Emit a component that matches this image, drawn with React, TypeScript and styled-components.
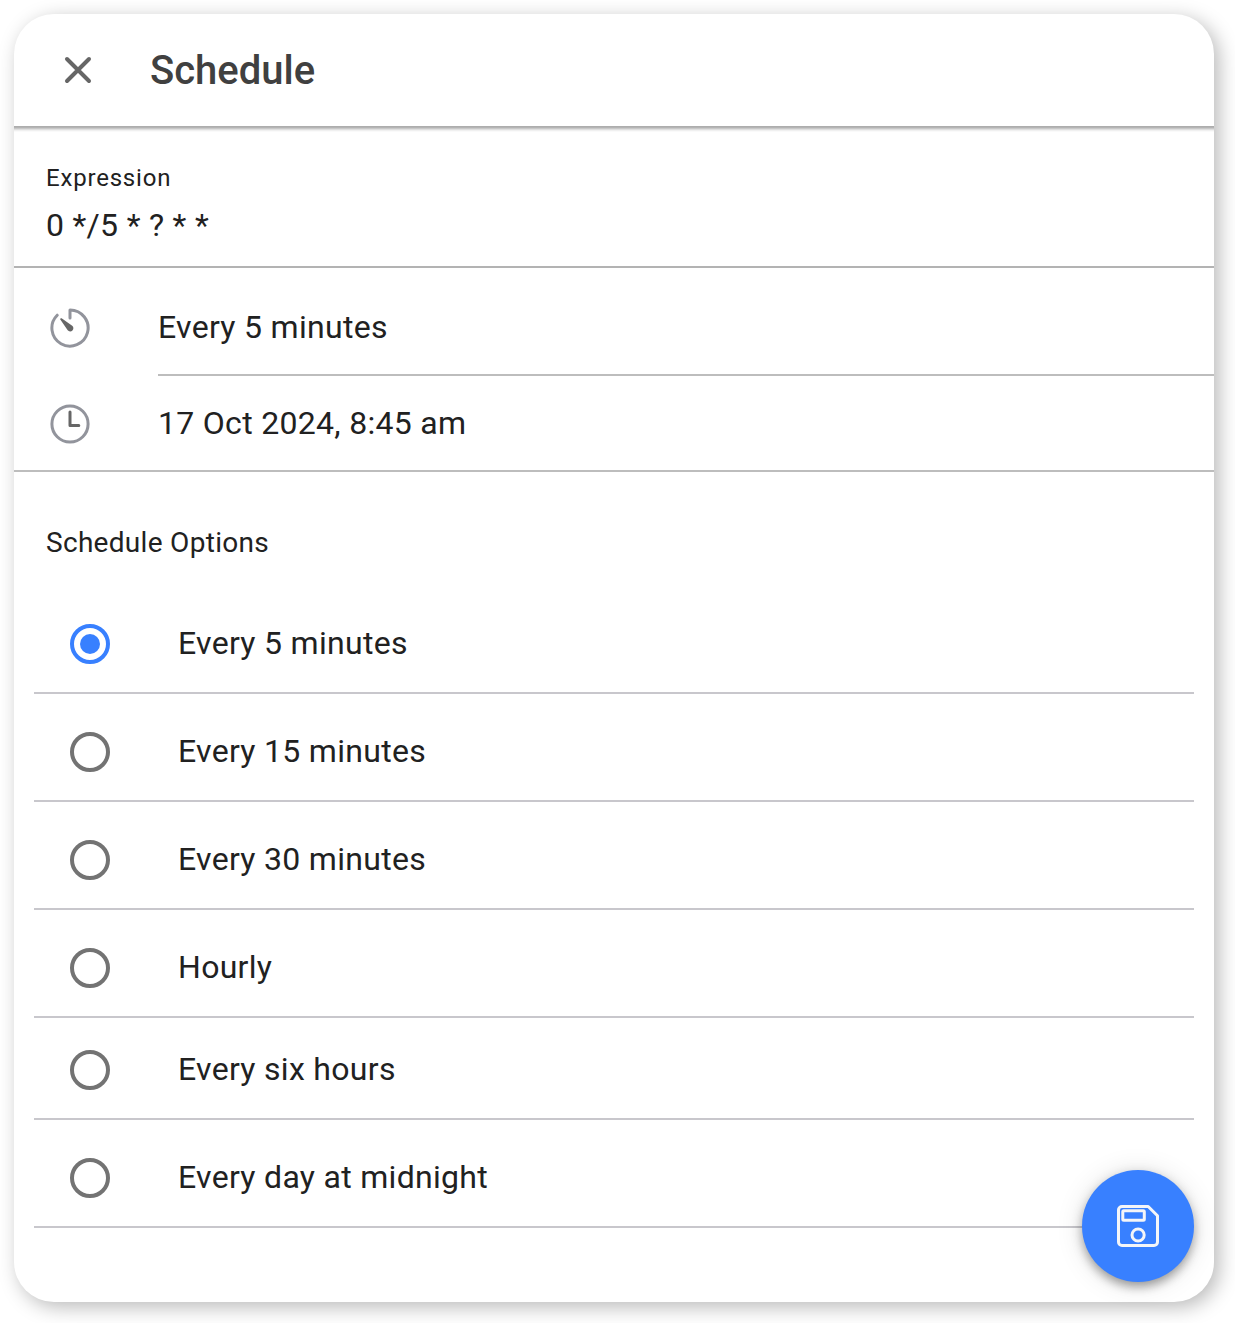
import React, { useState } from "react";
import styled, { createGlobalStyle } from "styled-components";

const GlobalStyle = createGlobalStyle`
  *, *::before, *::after { box-sizing: border-box; }
  body {
    margin: 0;
    background: #ffffff;
    color: #212121;
    font-family: Roboto, "Liberation Sans", sans-serif;
  }
`;

const Page = styled.div`
  height: 1323px;
  padding: 14px 0 0 14px;
  overflow: hidden;
`;

const Card = styled.main`
  position: relative;
  display: flex;
  flex-direction: column;
  width: 1200px;
  height: 1288px;
  background: #ffffff;
  border-radius: 40px;
  box-shadow: 5px 5px 20px rgba(0, 0, 0, 0.28);
`;

const Header = styled.header`
  display: flex;
  align-items: center;
  gap: 44px;
  flex: none;
  height: 112px;
  padding-left: 36px;
`;

const HeaderShade = styled.div`
  flex: none;
  height: 6px;
  margin-bottom: -6px;
  background: linear-gradient(
    to bottom,
    #adadad 0 1px,
    #b4b4b4 1px 2px,
    #c8c8c8 2px 3px,
    #dedede 3px 4px,
    #f0f0f0 4px 5px,
    #fafafa 5px 6px
  );
`;

const CloseButton = styled.button`
  display: grid;
  place-items: center;
  width: 56px;
  height: 56px;
  padding: 0;
  border: 0;
  background: none;
`;

const Title = styled.h1`
  margin: 0;
  padding-top: 2px;
  color: #404040;
  font-size: 40px;
  font-weight: 500;
  line-height: 48px;
`;

const Expression = styled.section`
  display: flex;
  flex-direction: column;
  gap: 8px;
  flex: none;
  height: 142px;
  padding: 38px 32px 0;
  border-bottom: 2px solid #b3b3b3;
`;

const Label = styled.span`
  font-size: 24px;
  line-height: 28px;
  letter-spacing: 0.8px;
`;

const Value = styled.span`
  font-size: 32px;
  line-height: 50px;
  letter-spacing: 0.3px;
`;

const Summary = styled.section`
  display: flex;
  flex-direction: column;
  flex: none;
  padding-top: 12px;
  border-bottom: 2px solid #bdbdbd;
`;

const SummaryRow = styled.div`
  display: grid;
  grid-template-columns: 108px 1fr;
  padding-left: 36px;
`;

const SummaryIcon = styled.span`
  display: flex;
  align-items: flex-start;
  padding-top: 28px;
`;

const SummaryText = styled.div<{ $divider?: boolean }>`
  display: flex;
  align-items: center;
  height: ${(p) => (p.$divider ? 96 : 94)}px;
  border-bottom: ${(p) => (p.$divider ? "2px solid #bdbdbd" : "0")};
  font-size: 32px;
  letter-spacing: 0.3px;
`;

const SectionTitle = styled.h2`
  margin: 0;
  padding: 54px 32px 0;
  font-size: 28px;
  font-weight: 400;
  line-height: 34px;
  letter-spacing: 0.3px;
`;

const OptionList = styled.div`
  display: flex;
  flex-direction: column;
  padding: 26px 20px 0;
`;

const Option = styled.label<{ $compact: boolean }>`
  display: flex;
  align-items: center;
  gap: 68px;
  height: ${(p) => (p.$compact ? 102 : 108)}px;
  padding: ${(p) => (p.$compact ? 4 : 10)}px 36px 0;
  border-bottom: 2px solid #c8c7cc;
  font-size: 32px;
  letter-spacing: 0.3px;
`;

const OptionText = styled.span`
  padding-bottom: 2px;
`;

const Radio = styled.input`
  appearance: none;
  display: grid;
  place-items: center;
  flex: none;
  width: 40px;
  height: 40px;
  margin: 0;
  border: 4px solid #737373;
  border-radius: 50%;

  &:checked {
    border-color: #3880ff;
  }

  &:checked::before {
    content: "";
    width: 20px;
    height: 20px;
    border-radius: 50%;
    background: #3880ff;
  }
`;

const SaveButton = styled.button`
  position: absolute;
  right: 20px;
  bottom: 20px;
  display: grid;
  place-items: center;
  width: 112px;
  height: 112px;
  padding: 0;
  border: 0;
  border-radius: 50%;
  background: #3880ff;
  box-shadow: 0 6px 10px -2px rgba(0, 0, 0, 0.2), 0 4px 12px rgba(0, 0, 0, 0.22),
    0 2px 28px rgba(0, 0, 0, 0.12);
`;

const CloseIcon = () => (
  <svg width="28" height="28" viewBox="0 0 28 28" fill="none" stroke="#666" strokeWidth="4" strokeLinecap="round">
    <path d="M3 3 25 25M25 3 3 25" />
  </svg>
);

const TimerIcon = () => (
  <svg width="40" height="40" viewBox="0 0 40 40" fill="none">
    <path
      d="M20 10V1.9A18.1 18.1 0 1 1 7.2 7.2"
      stroke="#92949c"
      strokeWidth="3"
      strokeLinecap="round"
      strokeLinejoin="round"
    />
    <path d="M11.6 10.3 22.2 17.7A3.2 3.2 0 1 1 17.7 22.2L10.3 11.6A.95 .95 0 0 1 11.6 10.3Z" fill="#666" />
  </svg>
);

const ClockIcon = () => (
  <svg width="40" height="40" viewBox="0 0 40 40" fill="none" strokeLinecap="round" strokeLinejoin="round">
    <circle cx="20" cy="20" r="18.1" stroke="#92949c" strokeWidth="3" />
    <path d="M20 8V21.5H28.8" stroke="#666" strokeWidth="3" />
  </svg>
);

const SaveIcon = () => (
  <svg width="44" height="44" viewBox="0 0 44 44" fill="none" stroke="#f4f5f8" strokeWidth="3" strokeLinejoin="round">
    <path d="M6 2.5H32.2L41.5 11.8V38a3.5 3.5 0 0 1-3.5 3.5H6A3.5 3.5 0 0 1 2.5 38V6A3.5 3.5 0 0 1 6 2.5Z" />
    <rect x="6.8" y="6.8" width="21.5" height="9.5" rx="1" />
    <circle cx="22.1" cy="31" r="6.1" />
  </svg>
);

const options = [
  { label: "Every 5 minutes" },
  { label: "Every 15 minutes" },
  { label: "Every 30 minutes" },
  { label: "Hourly" },
  { label: "Every six hours", compact: true },
  { label: "Every day at midnight" },
];

export default function App() {
  const [selected, setSelected] = useState("Every 5 minutes");

  return (
    <Page>
      <GlobalStyle />
      <Card>
        <Header>
          <CloseButton type="button" aria-label="Close">
            <CloseIcon />
          </CloseButton>
          <Title>Schedule</Title>
        </Header>
        <HeaderShade />
        <Expression>
          <Label>Expression</Label>
          <Value>0 */5 * ? * *</Value>
        </Expression>
        <Summary>
          <SummaryRow>
            <SummaryIcon>
              <TimerIcon />
            </SummaryIcon>
            <SummaryText $divider>Every 5 minutes</SummaryText>
          </SummaryRow>
          <SummaryRow>
            <SummaryIcon>
              <ClockIcon />
            </SummaryIcon>
            <SummaryText>17 Oct 2024, 8:45 am</SummaryText>
          </SummaryRow>
        </Summary>
        <SectionTitle>Schedule Options</SectionTitle>
        <OptionList role="radiogroup">
          {options.map(({ label, compact }) => (
            <Option key={label} $compact={!!compact}>
              <Radio
                type="radio"
                name="schedule"
                checked={selected === label}
                onChange={() => setSelected(label)}
              />
              <OptionText>{label}</OptionText>
            </Option>
          ))}
        </OptionList>
        <SaveButton type="button" aria-label="Save">
          <SaveIcon />
        </SaveButton>
      </Card>
    </Page>
  );
}
